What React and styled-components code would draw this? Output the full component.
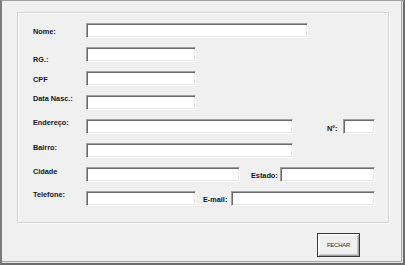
import React from "react";
import styled, { createGlobalStyle } from "styled-components";

const Global = createGlobalStyle`
  html, body { margin: 0; padding: 0; background: #f0f0f0; }
  * { box-sizing: border-box; }
`;

const Window = styled.div`
  width: 405px;
  height: 265px;
  background: #f0f0f0;
  border-top: 1px solid #a0a0a0;
  border-left: 2px solid #7c7c7c;
  border-right: 2px solid #6c6c6c;
  border-bottom: 2px solid #6c6c6c;
  box-shadow: inset -1px -1px 0 #e3e3e3, inset -2px -2px 0 #a8a8a8;
  display: flex;
  flex-direction: column;
  font-family: "Liberation Sans", Arial, sans-serif;
`;

const GroupBox = styled.div`
  margin: 11px 0 0 15px;
  width: 372px;
  height: 211px;
  border: 1px solid #d3d3d3;
  box-shadow: inset 1px 1px 0 #ffffff, 1px 1px 0 #ffffff;
  padding: 10px 0 0 15px;
  display: grid;
  grid-auto-rows: 15px;
  row-gap: 9px;
  align-content: start;
`;

const Row = styled.div`
  display: flex;
  align-items: flex-start;
  height: 15px;
`;

const Label = styled.span`
  width: ${(p) => p.$w || 53}px;
  margin-left: ${(p) => p.$ml || 0}px;
  margin-top: ${(p) => p.$mt || 0}px;
  font-size: 7.3px;
  line-height: 10px;
  font-weight: bold;
  color: #141424;
  white-space: nowrap;
  flex: none;
`;

const Input = styled.div`
  width: ${(p) => p.$w}px;
  height: 15px;
  flex: none;
  background: #ffffff;
  border: 1px solid;
  border-color: #a0a0a0 #ffffff #ffffff #a0a0a0;
  box-shadow: inset 1px 1px 0 #6a6a6a, inset -1px -1px 0 #e8e8e8;
`;

const Footer = styled.div`
  display: flex;
  justify-content: flex-end;
  padding: 10px 43px 0 0;
`;

const Button = styled.button`
  width: 43px;
  height: 24px;
  padding: 0;
  background: #f0f0f0;
  border: 1px solid #3a3a3a;
  box-shadow: inset 1px 1px 0 #ffffff, inset -1px -1px 0 #a0a0a0,
    inset 2px 2px 0 #f8f8f8, inset -2px -2px 0 #c8c8c8;
  font-family: "Liberation Sans", Arial, sans-serif;
  font-size: 5.8px;
  color: #2a2a2a;
  letter-spacing: -0.1px;
`;

export default function App() {
  return (
    <>
      <Global />
      <Window>
        <GroupBox>
          <Row>
            <Label $mt={4}>Nome:</Label>
            <Input $w={222} />
          </Row>
          <Row>
            <Label $mt={8}>RG.:</Label>
            <Input $w={110} />
          </Row>
          <Row>
            <Label $mt={4}>CPF</Label>
            <Input $w={110} />
          </Row>
          <Row>
            <Label $mt={-1}>Data Nasc.:</Label>
            <Input $w={110} />
          </Row>
          <Row>
            <Label $mt={-1}>Endereço:</Label>
            <Input $w={207} />
            <Label $ml={34} $w={16} $mt={5}>Nº:</Label>
            <Input $w={32} />
          </Row>
          <Row>
            <Label $mt={0}>Bairro:</Label>
            <Input $w={207} />
          </Row>
          <Row>
            <Label $mt={0}>Cidade</Label>
            <Input $w={154} />
            <Label $ml={11} $w={29} $mt={4}>Estado:</Label>
            <Input $w={95} />
          </Row>
          <Row>
            <Label $mt={-1}>Telefone:</Label>
            <Input $w={110} />
            <Label $ml={7} $w={28} $mt={4}>E-mail:</Label>
            <Input $w={144} />
          </Row>
        </GroupBox>
        <Footer>
          <Button>FECHAR</Button>
        </Footer>
      </Window>
    </>
  );
}
